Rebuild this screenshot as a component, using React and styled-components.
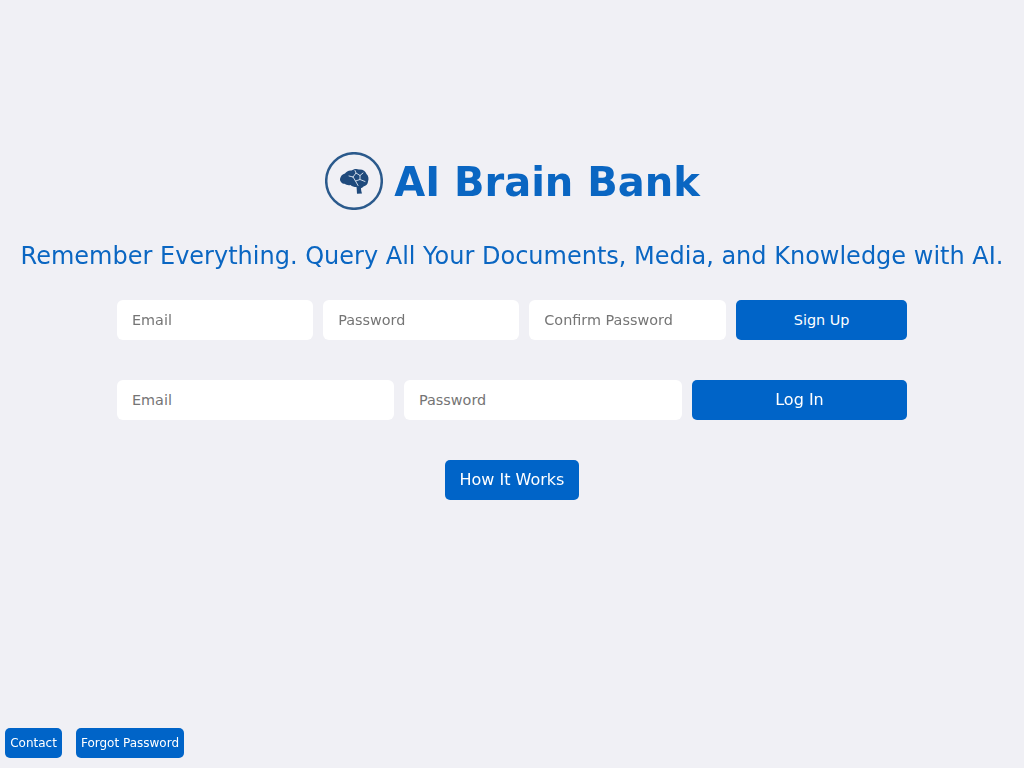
import React from 'react';
import styled, { createGlobalStyle } from 'styled-components';

const GlobalStyle = createGlobalStyle`
  * {
    box-sizing: border-box;
  }
  body {
    margin: 0;
    background: #f0f0f5;
    font-family: "DejaVu Sans", sans-serif;
  }
`;

const Page = styled.div`
  height: 768px;
  display: flex;
  flex-direction: column;
  align-items: center;
  padding-top: 152px;
  overflow: hidden;
  will-change: opacity;
`;

const Brand = styled.div`
  display: flex;
  align-items: center;
  gap: 11px;
  height: 58px;
  padding-left: 1px;
`;

const Logo = styled.svg`
  width: 58px;
  height: 58px;
  flex: none;
`;

const Title = styled.h1`
  margin: 2px 0 0;
  font-size: 40px;
  font-weight: 700;
  line-height: 58px;
  color: #0a66c2;
`;

const Tagline = styled.p`
  margin: 29px 0 0;
  font-size: 24px;
  line-height: 34px;
  color: #0a66c2;
  white-space: nowrap;
`;

const FormRow = styled.form`
  width: 790px;
  display: flex;
  gap: ${(p) => p.$gap}px;
  margin-top: ${(p) => p.$top}px;
`;

const Input = styled.input`
  flex: none;
  width: ${(p) => p.$width}px;
  height: 40px;
  padding: 0 15px;
  border: none;
  border-radius: 6px;
  background: #fff;
  font-family: inherit;
  font-size: 14.4px;
  color: #333;
  outline: none;

  &::placeholder {
    color: #757575;
    opacity: 1;
  }
`;

const Button = styled.button`
  flex: none;
  width: ${(p) => p.$width}px;
  height: ${(p) => p.$height || 40}px;
  padding: 0 0 ${(p) => p.$lift || 0}px;
  border: none;
  border-radius: 5px;
  background: #0064c8;
  color: #fff;
  font-family: inherit;
  font-size: ${(p) => p.$size || 16}px;
  cursor: pointer;
`;

const CenterAction = styled.div`
  margin-top: 40px;
`;

const Footer = styled.footer`
  align-self: stretch;
  margin-top: auto;
  display: flex;
  gap: 14px;
  padding: 0 0 10px 5px;
`;

const BrainLogo = () => (
  <Logo viewBox="0 0 58 58" aria-hidden="true">
    <circle cx="29" cy="29" r="27.8" fill="none" stroke="#2b5a8c" strokeWidth="2.5" />
    <path
      d="M15 27C15.500 24 17.500 22 20 21.500C21 19.500 24 18 26.500 18.500C28.500 16.800 32 16.500 34 17.500C37.500 17 40.500 19 41.500 22C43.500 23.500 44 27 43 29.500C43 32 41 34 38.500 34.500C37.500 35.500 36.500 36 36 36C36 38 36.500 40 37 41.500L32 41.800C31.800 39 31.800 37 31.500 35C29 35 27 34.500 25.500 33C23.500 33.500 21 33 19.500 31.800C17 31.800 14.800 29.500 15 27Z"
      fill="#1f4a7c"
    />
    <path
      d="M28 25L31 21L35 23.500L38 21M28 25L30.500 29L35 27.500L35 23.500M30.500 29L33 33.500M35 27.500L40 29.500M24 24L28 25M31 21L30 18.500"
      fill="none"
      stroke="#dfe8f2"
      strokeWidth="0.9"
      strokeLinecap="round"
      strokeLinejoin="round"
    />
  </Logo>
);

const App = () => (
  <>
    <GlobalStyle />
    <Page>
      <Brand>
        <BrainLogo />
        <Title>AI Brain Bank</Title>
      </Brand>
      <Tagline>Remember Everything. Query All Your Documents, Media, and Knowledge with AI.</Tagline>
      <FormRow $top={27} $gap={9.9}>
        <Input $width={196.25} type="email" placeholder="Email" />
        <Input $width={196.25} type="password" placeholder="Password" />
        <Input $width={197.2} type="password" placeholder="Confirm Password" />
        <Button type="button" $width={170.6} $size={14.4}>Sign Up</Button>
      </FormRow>
      <FormRow $top={40} $gap={10}>
        <Input $width={277} type="email" placeholder="Email" />
        <Input $width={278} type="password" placeholder="Password" />
        <Button type="button" $width={215} $lift={2}>Log In</Button>
      </FormRow>
      <CenterAction>
        <Button type="button" $width={134} $lift={2}>How It Works</Button>
      </CenterAction>
      <Footer>
        <Button type="button" $width={57} $height={30} $size={12}>Contact</Button>
        <Button type="button" $width={108} $height={30} $size={12}>Forgot Password</Button>
      </Footer>
    </Page>
  </>
);

export default App;
